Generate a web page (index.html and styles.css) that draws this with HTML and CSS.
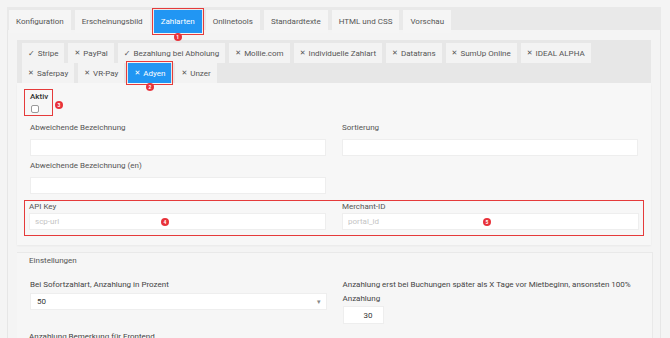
FILE: index.html
```html
<!DOCTYPE html>
<html lang="de">
<head>
<meta charset="utf-8">
<title>Zahlarten</title>
<link rel="stylesheet" href="styles.css">
</head>
<body>
<div class="page">
  <div class="tabbar">
    <div class="tab">Konfiguration</div>
    <div class="tab">Erscheinungsbild</div>
    <div class="tab active marked">Zahlarten<span class="badge b-below">1</span></div>
    <div class="tab">Onlinetools</div>
    <div class="tab">Standardtexte</div>
    <div class="tab">HTML und CSS</div>
    <div class="tab">Vorschau</div>
  </div>
  <div class="outer">
    <div class="subtabs">
      <div class="stab"><span class="ok">✓</span>Stripe</div>
      <div class="stab"><span class="x">✕</span>PayPal</div>
      <div class="stab"><span class="ok">✓</span>Bezahlung bei Abholung</div>
      <div class="stab"><span class="x">✕</span>Mollie.com</div>
      <div class="stab"><span class="x">✕</span>Individuelle Zahlart</div>
      <div class="stab"><span class="x">✕</span>Datatrans</div>
      <div class="stab"><span class="x">✕</span>SumUp Online</div>
      <div class="stab"><span class="x">✕</span>IDEAL ALPHA</div>
      <div class="stab"><span class="x">✕</span>Saferpay</div>
      <div class="stab"><span class="x">✕</span>VR-Pay</div>
      <div class="stab active marked"><span class="x">✕</span>Adyen<span class="badge b-below">2</span></div>
      <div class="stab"><span class="x">✕</span>Unzer</div>
    </div>
    <div class="panel">
      <div class="aktiv marked">
        <div class="aktiv-label">Aktiv</div>
        <input type="checkbox" class="cb">
        <span class="badge b-right">3</span>
      </div>
      <div class="grid">
        <div class="field">
          <label>Abweichende Bezeichnung</label>
          <input type="text" class="inp">
        </div>
        <div class="field">
          <label>Sortierung</label>
          <input type="text" class="inp">
        </div>
        <div class="field">
          <label>Abweichende Bezeichnung (en)</label>
          <input type="text" class="inp">
        </div>
        <div class="field"></div>
      </div>
      <div class="grid keys marked">
        <div class="field">
          <label>API Key</label>
          <input type="text" class="inp" placeholder="scp-url">
          <span class="badge b-k1">4</span>
        </div>
        <div class="field">
          <label>Merchant-ID</label>
          <input type="text" class="inp" placeholder="portal_id">
          <span class="badge b-k2">5</span>
        </div>
      </div>
    </div>
    <div class="settings">
      <div class="legend">Einstellungen</div>
      <div class="grid sgrid">
        <div class="field">
          <label>Bei Sofortzahlart, Anzahlung in Prozent</label>
          <div class="select"><span>50</span><span class="caret">▾</span></div>
        </div>
        <div class="field">
          <label>Anzahlung erst bei Buchungen später als X Tage vor Mietbeginn, ansonsten 100% Anzahlung</label>
          <input type="text" class="inp small" value="30">
        </div>
      </div>
      <div class="more">Anzahlung Bemerkung für Frontend</div>
    </div>
  </div>
</div>
</body>
</html>
```

FILE: styles.css
```css
* { box-sizing: border-box; }
html, body { margin: 0; }
body {
  background: #f4f4f4;
  font-family: Roboto, "Liberation Sans", sans-serif;
  font-size: 8px;
  color: #444;
  width: 670px;
  height: 338px;
  overflow: hidden;
}
.page { padding: 7px 9px 0 7px; }

.tabbar {
  display: flex;
  gap: 4px;
  background: #e9e9e9;
  height: 23px;
  padding: 3px 2px 0;
}
.tab {
  position: relative;
  height: 23px;
  padding: 0 7px;
  display: flex;
  align-items: center;
  background: #f5f5f5;
  color: #555;
  white-space: nowrap;
}
.tab.active { background: #2196f3; color: #fff; }
.marked { outline: 1.5px solid #e53b3b; }
.tab.marked { outline-offset: 1px; }

.outer {
  border: 1px solid #e6e6e6;
  border-top: none;
  padding: 10px 9px 20px 9px;
  background: #f4f4f4;
}

.subtabs {
  display: flex;
  flex-wrap: wrap;
  gap: 0 4px;
  background: #e7e7e7;
  padding: 3px 5px 0;
  width: 634px;
}
.stab {
  position: relative;
  height: 20px;
  padding: 0 6px;
  display: flex;
  align-items: center;
  background: #f3f3f3;
  color: #555;
  white-space: nowrap;
}
.stab.active { background: #2196f3; color: #fff; }
.stab.marked { outline-offset: 1px; }
.ok, .x {
  font-family: "DejaVu Sans", sans-serif;
  margin-right: 3px;
  font-size: 8px;
}
.ok { font-weight: bold; }
.x { font-weight: bold; font-size: 7px; }

.panel {
  width: 634px;
  background: #f7f7f7;
  padding: 6px 7px 9px;
  box-shadow: 0 1px 2px rgba(0,0,0,0.05);
}
.aktiv {
  position: relative;
  width: 29px;
  height: 27px;
  padding: 3px 0 0 6px;
  outline-offset: -1px;
}
.aktiv-label { color: #333; font-weight: 500; line-height: 10px; }
.cb {
  margin: 3px 0 0 1px;
  width: 8px;
  height: 8px;
  display: block;
  appearance: none;
  border: 1px solid #999;
  border-radius: 2px;
  background: #fff;
}

.grid {
  display: grid;
  grid-template-columns: 1fr 1fr;
  column-gap: 16px;
  padding: 0 6px;
}
.panel > .grid { margin-top: 6px; row-gap: 4px; }
.field { position: relative; display: flex; flex-direction: column; }
.field label { line-height: 11px; color: #555; margin-bottom: 6px; }
.inp {
  height: 17px;
  border: 1px solid #eee;
  background: #fff;
  font: inherit;
  color: #555;
  padding: 0 5px;
  outline: none;
}
.inp::placeholder { color: #c4c4c4; }
.keys {
  margin-top: 4px;
  padding: 1px 5px 6px;
  outline-offset: -1px;
}
.keys .field label { margin-bottom: 1px; }

.settings {
  margin-top: 7px;
  width: 636px;
  border-top: 1px solid #e9e9e9;
  border-right: 1px solid #e9e9e9;
  background: #f6f6f6;
  padding: 2px 6px 0 6px;
}
.legend { color: #555; line-height: 11px; padding-left: 6px; }
.sgrid { margin-top: 12px; padding-left: 7px; padding-right: 7px; }
.sgrid label { line-height: 14px; margin-bottom: 1px; color: #444; }
.select {
  height: 17px;
  background: #fff;
  border: 1px solid #eee;
  display: flex;
  justify-content: space-between;
  align-items: center;
  padding: 0 5px 0 6px;
  color: #333;
}
.caret { color: #888; font-size: 7px; font-family: "DejaVu Sans", sans-serif; }
.inp.small { width: 41px; height: 18px; text-align: right; padding-right: 10px; color: #333; margin-top: -1px; }
.more { margin-top: 8px; padding-left: 6px; color: #444; }

.badge {
  position: absolute;
  width: 8px;
  height: 8px;
  border-radius: 50%;
  background: #e8323a;
  color: #fff;
  font-size: 5px;
  line-height: 8px;
  text-align: center;
  font-weight: bold;
}
.b-below { left: 50%; margin-left: -4px; bottom: -8px; }
.b-right { left: 31px; top: 12px; }
.b-k1 { left: 132px; top: 17px; }
.b-k2 { left: 141px; top: 17px; }
```
